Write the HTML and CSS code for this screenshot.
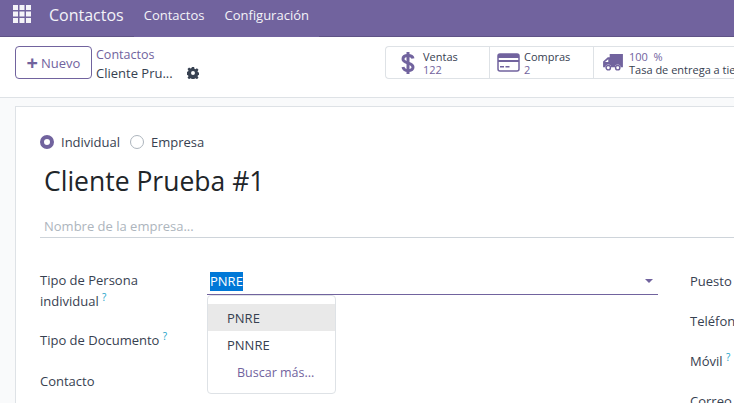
FILE: index.html
```html
<!DOCTYPE html>
<html lang="es">
<head>
    <meta charset="UTF-8">
    <title>Cliente Prueba #1 - Contactos</title>
    <link rel="stylesheet" href="styles.css">
</head>
<body>
    <header class="navbar">
        <svg class="apps-icon" width="18" height="18" viewBox="0 0 18 18">
            <path fill="#f4f3f8" d="M0 0h5v5H0zM6.500 0h5v5h-5zM13 0h5v5h-5zM0 6.500h5v5H0zM6.500 6.500h5v5h-5zM13 6.500h5v5h-5zM0 13h5v5H0zM6.500 13h5v5h-5zM13 13h5v5h-5z"/>
        </svg>
        <span class="brand">Contactos</span>
        <nav class="menu">
            <a>Contactos</a>
            <a>Configuración</a>
        </nav>
    </header>

    <div class="control-panel">
        <button class="btn-new"><span class="plus">+</span>Nuevo</button>
        <div class="breadcrumb">
            <a>Contactos</a>
            <div class="current">
                <span>Cliente Pru...</span>
                <svg class="gear" width="12" height="12" viewBox="0 0 14 14">
                    <path fill="#374151" fill-rule="evenodd" d="M5.700 0h2.600l.4 2 1.200.5 1.700-1.100 1.800 1.800-1.100 1.700.5 1.200 2 .4v2.600l-2 .4-.5 1.200 1.100 1.700-1.800 1.800-1.700-1.100-1.200.5-.4 2H5.700l-.4-2-1.200-.5-1.700 1.100-1.800-1.800 1.100-1.700-.5-1.200-2-.4V5.700l2-.4.500-1.200-1.100-1.700 1.800-1.800 1.700 1.100 1.200-.5zM7 4.700a2.300 2.300 0 1 0 0 4.600 2.300 2.300 0 0 0 0-4.600z"/>
                </svg>
            </div>
        </div>
        <div class="stats">
            <div class="stat stat-sales">
                <svg width="14" height="24" viewBox="0 0 14 24">
                    <path fill="none" stroke="#71639e" stroke-width="3" d="M12 7.500C11.500 5 9.500 4.500 7 4.500S2 5.500 2 8s2.500 3.200 5 4 5 1.500 5 4-2.500 3.500-5 3.500-4.500-.8-5-3.500"/>
                    <path fill="#71639e" d="M5.500 1h3v22h-3z"/>
                </svg>
                <div class="stat-text"><span class="stat-label">Ventas</span><span class="stat-value">122</span></div>
            </div>
            <div class="stat stat-buy">
                <svg width="23" height="19" viewBox="0 0 23 19">
                    <rect x="1" y="1" width="21" height="17" rx="2" fill="none" stroke="#71639e" stroke-width="1.500"/>
                    <path fill="#71639e" d="M1 1h21v4H1zM1 7h21v2H1zM3 13h4v1.500H3zM8.500 13h4v1.500h-4z"/>
                </svg>
                <div class="stat-text"><span class="stat-label">Compras</span><span class="stat-value">2</span></div>
            </div>
            <div class="stat stat-rate">
                <svg width="20" height="17" viewBox="0 0 21 18">
                    <path fill="#71639e" fill-rule="evenodd" d="M7 0h14v14h-2.500a3 3 0 0 0-6 0H8.500a3 3 0 0 0-6 0H0V8l5-4.500h2zM5.500 5.500 2 8.500h3.500z"/>
                    <circle cx="5.500" cy="14.500" r="2.300" fill="none" stroke="#71639e" stroke-width="1.500"/>
                    <circle cx="15.500" cy="14.500" r="2.300" fill="none" stroke="#71639e" stroke-width="1.500"/>
                </svg>
                <div class="stat-text rate-text"><span class="stat-value">100 &nbsp;%</span><span class="stat-label">Tasa de entrega a tiempo</span></div>
            </div>
        </div>
    </div>

    <main class="content">
        <section class="sheet">
            <div class="radios">
                <label class="radio"><span class="dot dot-on"></span>Individual</label>
                <label class="radio"><span class="dot"></span>Empresa</label>
            </div>
            <h1 class="title">Cliente Prueba #1</h1>
            <div class="company">Nombre de la empresa...</div>

            <div class="columns">
                <div class="col-left">
                    <div class="field field-person">
                        <label class="field-label">Tipo de Persona individual <sup>?</sup></label>
                        <div class="select-box">
                            <span class="selected-text">PNRE</span>
                            <span class="caret"></span>
                        </div>
                        <ul class="dropdown">
                            <li class="active">PNRE</li>
                            <li>PNNRE</li>
                            <li class="more">Buscar más...</li>
                        </ul>
                    </div>
                    <div class="field field-doc">
                        <label class="field-label">Tipo de Documento <sup>?</sup></label>
                    </div>
                    <div class="field field-contact">
                        <label class="field-label">Contacto</label>
                    </div>
                </div>
                <div class="col-right">
                    <div class="right-label">Puesto de trabajo</div>
                    <div class="right-label">Teléfono</div>
                    <div class="right-label">Móvil <sup>?</sup></div>
                    <div class="right-label">Correo electrónico</div>
                </div>
            </div>
        </section>
    </main>
</body>
</html>
```

FILE: styles.css
```css
html, body {
    height: 100%;
}

body {
    margin: 0;
    width: 734px;
    height: 403px;
    overflow: hidden;
    font-family: "Open Sans", "Noto Sans", sans-serif;
    font-size: 13px;
    color: #374151;
    background-color: #f9fafb;
}

.navbar {
    display: flex;
    align-items: center;
    box-sizing: border-box;
    height: 37px;
    padding: 0 0 6px 13px;
    background-color: #71639e;
    border-bottom: 1px solid #5f5386;
    color: #f4f3f8;
}

.apps-icon {
    margin-top: -3px;
}

.brand {
    margin-left: 18px;
    font-size: 16px;
}

.menu {
    display: flex;
    align-self: stretch;
    align-items: center;
    gap: 20px;
    margin: 0 0 -7px 10px;
    padding: 0 10px 7px;
    background-color: #71639e;
    font-size: 13px;
}

.control-panel {
    display: flex;
    align-items: flex-start;
    box-sizing: border-box;
    height: 61px;
    padding: 9px 0 0 15px;
    background-color: #fff;
    border-bottom: 1px solid #dee2e6;
}

.btn-new {
    flex: none;
    width: 77px;
    height: 33px;
    padding: 0;
    border: 1px solid #71639e;
    border-radius: 4px;
    background-color: #fff;
    color: #71639e;
    font-family: inherit;
    font-size: 13px;
}

.plus {
    margin-right: 3px;
    font-size: 20px;
    font-weight: bold;
    line-height: 1;
    vertical-align: -2px;
}

.breadcrumb {
    flex: none;
    width: 289px;
    margin-left: 4px;
    line-height: 18px;
    font-size: 12.500px;
}

.breadcrumb a {
    color: #71639e;
}

.current {
    display: flex;
    align-items: center;
    gap: 14px;
    font-size: 13px;
}

.stats {
    display: flex;
    flex: none;
    height: 33px;
    box-sizing: border-box;
    border: 1px solid #dee2e6;
    border-right: 0;
    border-radius: 4px 0 0 4px;
}

.stat {
    display: flex;
    align-items: center;
    box-sizing: border-box;
    border-right: 1px solid #dee2e6;
    line-height: 13px;
}

.stat-sales {
    width: 104px;
    padding-left: 15px;
    gap: 8px;
}

.stat-buy {
    width: 104px;
    padding-left: 7px;
    gap: 4px;
}

.stat-rate {
    padding-left: 9px;
    gap: 6px;
    border-right: 0;
    white-space: nowrap;
}

.stat-text {
    display: flex;
    flex-direction: column;
    font-size: 11px;
}

.stat-value {
    color: #71639e;
}

.sheet {
    box-sizing: border-box;
    height: 297px;
    margin: 8px 0 0 15px;
    padding: 25px 0 0 24px;
    overflow: hidden;
    background-color: #fff;
    border: 1px solid #dee2e6;
    border-width: 1px 0 0 1px;
}

.radios {
    display: flex;
    gap: 10px;
}

.radio {
    display: flex;
    align-items: center;
    gap: 7px;
    line-height: 20px;
}

.dot {
    box-sizing: border-box;
    width: 14px;
    height: 14px;
    border: 1px solid #adb5bd;
    border-radius: 50%;
}

.dot-on {
    border: 4px solid #71639e;
}

.title {
    margin: 9px 0 0 4px;
    font-size: 26.500px;
    font-weight: 400;
    line-height: 40px;
    color: #212529;
}

.company {
    margin-top: 15px;
    padding: 0 0 1px 4px;
    border-bottom: 1px solid #ced4da;
    color: #adb5bd;
    line-height: 20px;
}

.columns {
    display: flex;
    margin-top: 32px;
}

.col-left {
    flex: none;
    width: 650px;
}

.field {
    position: relative;
    display: flex;
}

.field-label {
    flex: none;
    width: 135px;
    line-height: 21px;
}

.field-doc {
    margin-top: 18px;
}

.field-contact {
    margin-top: 20px;
}

sup {
    color: #17a2c8;
    font-size: 10px;
    line-height: 0;
}

.select-box {
    display: flex;
    justify-content: space-between;
    align-items: center;
    box-sizing: border-box;
    width: 451px;
    height: 25px;
    margin-left: 32px;
    padding: 0 5px 2px 3px;
    border-bottom: 1px solid #71639e;
}

.selected-text {
    background-color: #0078d7;
    color: #fff;
    line-height: 19px;
}

.caret {
    width: 0;
    height: 0;
    border-top: 4px solid #71639e;
    border-left: 4px solid transparent;
    border-right: 4px solid transparent;
}

.dropdown {
    position: absolute;
    top: 25px;
    left: 167px;
    width: 127px;
    margin: 0;
    padding: 8px 0;
    list-style: none;
    background-color: #fff;
    border: 1px solid #dee2e6;
    border-radius: 4px;
}

.dropdown li {
    padding: 1px 0 0 19px;
    height: 26px;
    line-height: 27px;
    color: #374151;
}

.dropdown .more {
    padding-left: 29px;
    color: #71639e;
    font-size: 12.500px;
}

.dropdown .active {
    background-color: #e9e9e9;
}

.col-right {
    padding-top: 1px;
}

.right-label {
    margin-bottom: 19px;
    line-height: 21px;
    white-space: nowrap;
}
```
